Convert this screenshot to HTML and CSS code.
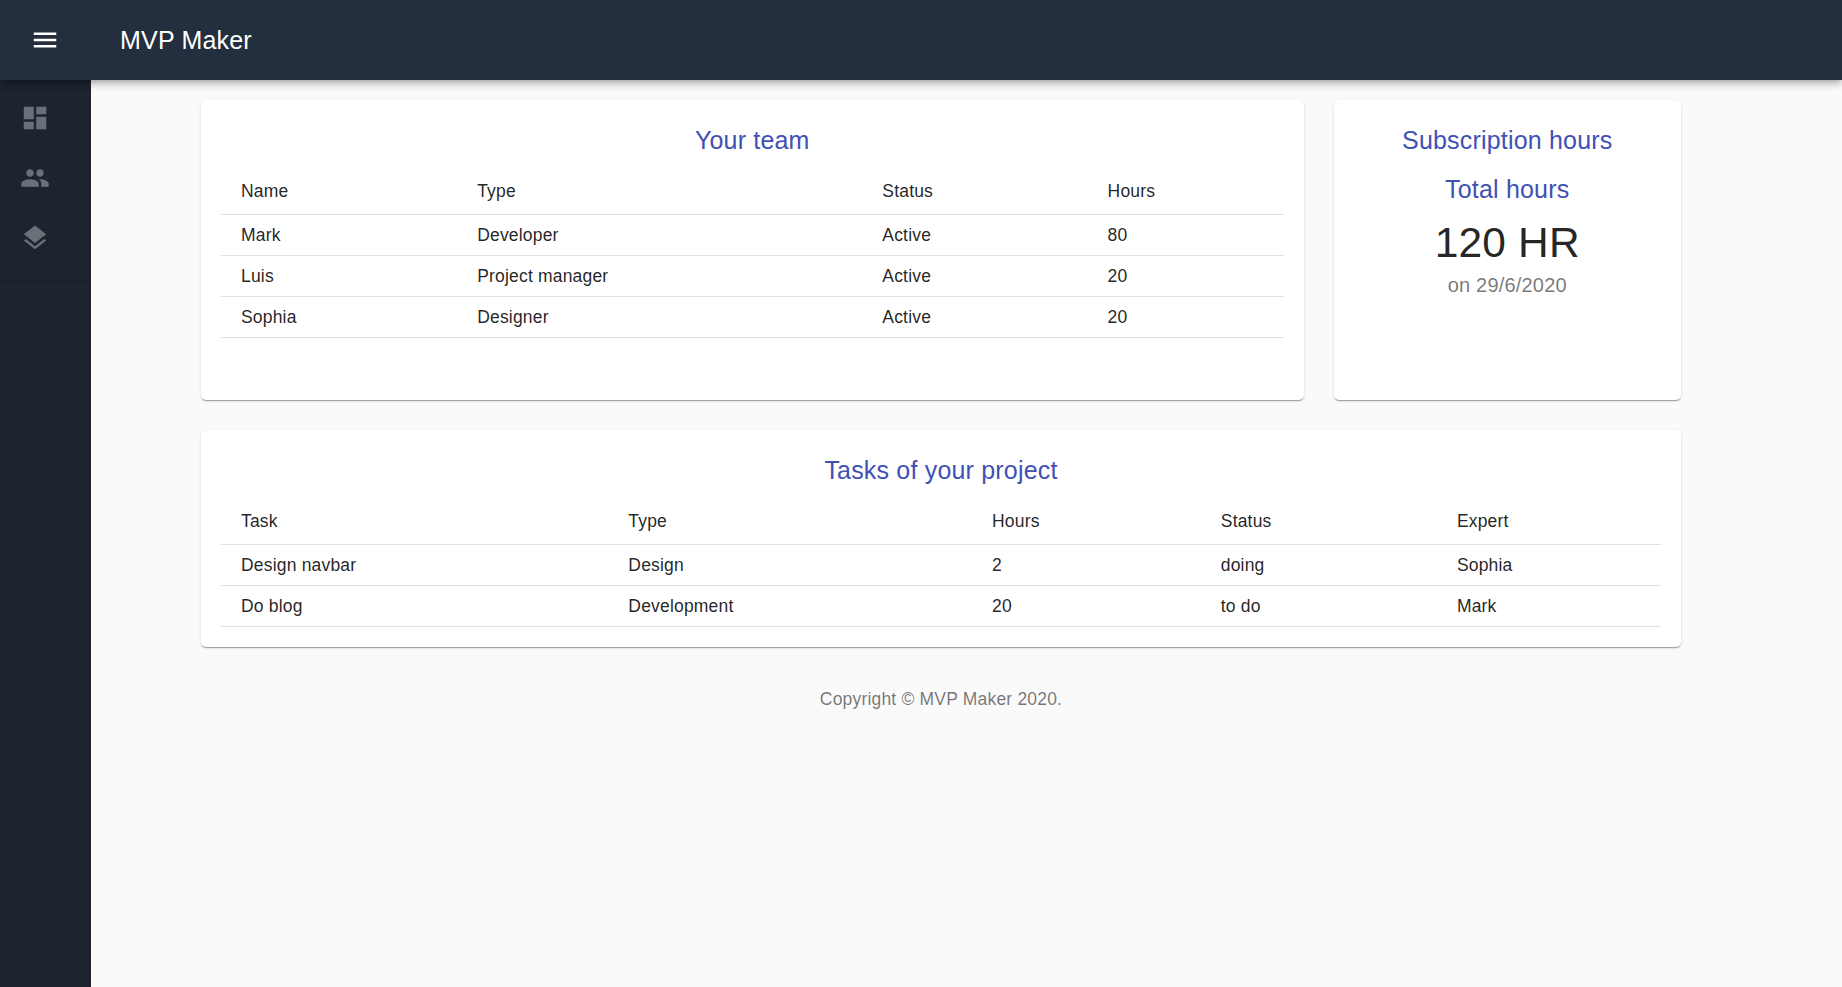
FILE: index.html
```html
<!DOCTYPE html>
<html lang="en">
<head>
  <meta charset="UTF-8" />
  <meta name="viewport" content="width=device-width, initial-scale=1.0"/>
  <title>MVP Maker</title>
  <link rel="stylesheet" href="styles.css">
</head>
<body>
  <header class="app-bar">
    <button class="menu-btn" aria-label="open drawer">
      <svg class="icon" viewBox="0 0 24 24"><path d="M3 18h18v-2H3v2zm0-5h18v-2H3v2zm0-7v2h18V6H3z"/></svg>
    </button>
    <h1 class="app-title">MVP Maker</h1>
  </header>

  <div class="layout">
    <nav class="drawer">
      <ul class="nav-list">
        <li><a href="#" aria-label="Dashboard"><svg class="icon" viewBox="0 0 24 24"><path d="M3 13h8V3H3v10zm0 8h8v-6H3v6zm10 0h8V11h-8v10zm0-18v6h8V3h-8z"/></svg></a></li>
        <li><a href="#" aria-label="Team"><svg class="icon" viewBox="0 0 24 24"><path d="M16 11c1.66 0 2.99-1.34 2.99-3S17.66 5 16 5c-1.66 0-3 1.34-3 3s1.34 3 3 3zm-8 0c1.66 0 2.99-1.34 2.99-3S9.66 5 8 5C6.34 5 5 6.34 5 8s1.34 3 3 3zm0 2c-2.33 0-7 1.17-7 3.5V19h14v-2.5c0-2.33-4.67-3.5-7-3.5zm8 0c-.29 0-.62.02-.97.05 1.16.84 1.97 1.97 1.97 3.45V19h6v-2.5c0-2.33-4.67-3.5-7-3.5z"/></svg></a></li>
        <li><a href="#" aria-label="Projects"><svg class="icon" viewBox="0 0 24 24"><path d="M11.99 18.54l-7.37-5.73L3 14.07l9 7 9-7-1.63-1.27-7.38 5.74zM12 16l7.36-5.73L21 9l-9-7-9 7 1.63 1.27L12 16z"/></svg></a></li>
      </ul>
    </nav>

    <main class="content">
      <div class="grid">
        <section class="paper">
          <h2>Your team</h2>
          <table>
            <thead>
              <tr><th>Name</th><th>Type</th><th>Status</th><th>Hours</th></tr>
            </thead>
            <tbody>
              <tr><td>Mark</td><td>Developer</td><td>Active</td><td>80</td></tr>
              <tr><td>Luis</td><td>Project manager</td><td>Active</td><td>20</td></tr>
              <tr><td>Sophia</td><td>Designer</td><td>Active</td><td>20</td></tr>
            </tbody>
          </table>
        </section>

        <section class="paper">
          <h2>Subscription hours</h2>
          <h2>Total hours</h2>
          <p class="hours">120 HR</p>
          <p class="date">on 29/6/2020</p>
        </section>

        <section class="paper tasks">
          <h2>Tasks of your project</h2>
          <table>
            <thead>
              <tr><th>Task</th><th>Type</th><th>Hours</th><th>Status</th><th>Expert</th></tr>
            </thead>
            <tbody>
              <tr><td>Design navbar</td><td>Design</td><td>2</td><td>doing</td><td>Sophia</td></tr>
              <tr><td>Do blog</td><td>Development</td><td>20</td><td>to do</td><td>Mark</td></tr>
            </tbody>
          </table>
        </section>
      </div>
      <footer>Copyright © MVP Maker 2020.</footer>
    </main>
  </div>
</body>
</html>
```
FILE: styles.css
```css
* { box-sizing: border-box; }
body {
  margin: 0;
  height: 100vh;
  display: flex;
  flex-direction: column;
  background: #fafafa;
  color: rgba(0, 0, 0, 0.87);
  font-family: "Liberation Sans", Arial, sans-serif;
  font-size: 17.5px;
  line-height: 1.43;
  letter-spacing: 0.01071em;
}
h1, h2, p, ul { margin: 0; padding: 0; }
.icon { display: block; width: 30px; height: 30px; fill: currentColor; }

/* top bar */
.app-bar {
  position: relative;
  z-index: 1;
  flex: none;
  display: flex;
  align-items: center;
  height: 80px;
  padding: 0 30px;
  background: #232f3e;
  color: #fff;
  box-shadow: 0 2.5px 5px -1.25px rgba(0, 0, 0, 0.2), 0 5px 6.25px rgba(0, 0, 0, 0.14), 0 1.25px 12.5px rgba(0, 0, 0, 0.12);
}
.menu-btn { margin: 0 45px 0 -15px; padding: 15px; border: 0; background: none; color: inherit; }
.app-title { font-size: 25px; font-weight: 400; line-height: 1.6; letter-spacing: 0.0075em; }

.layout { flex: 1; display: flex; min-height: 0; }

/* side menu */
.drawer { flex: none; width: 91px; background: #1d2430; }
.nav-list { list-style: none; padding: 11px 0 10px; border-bottom: 2px solid rgba(0, 0, 0, 0.1); }
.nav-list a { display: block; height: 60px; padding: 12px 20px; color: #697078; }

/* content */
.content { flex: 1; padding: 20px 51px 0 0; overflow: auto; }
.grid { display: grid; grid-template-columns: 1102.5px 347.5px; gap: 30px; width: 1480px; margin: 0 auto; }
.paper {
  min-height: 300px;
  padding: 20px;
  border-radius: 5px;
  background: #fff;
  text-align: center;
  box-shadow: 0 2px 1px -1px rgba(0, 0, 0, 0.2), 0 1px 1px rgba(0, 0, 0, 0.14), 0 1px 3px rgba(0, 0, 0, 0.12);
}
.tasks { grid-column: 1 / -1; min-height: 0; }
h2 { margin-bottom: 0.35em; color: #3f51b5; font-size: 25px; font-weight: 400; line-height: 1.6; letter-spacing: 0.0075em; }

table { width: 100%; border-collapse: separate; border-spacing: 0; text-align: left; }
th, td { padding: 7.5px 30px 7.5px 20px; border-bottom: 1px solid #e0e0e0; font-weight: 400; }
th:last-child, td:last-child { padding-right: 20px; }
th { line-height: 30px; }
td { padding-top: 8px; padding-bottom: 7px; }

.hours { margin: -1px 0 1px; font-size: 42.5px; line-height: 1.235; }
.date { color: rgba(0, 0, 0, 0.54); font-size: 20px; line-height: 1.5; letter-spacing: 0.00938em; }
footer { padding-top: 40px; text-align: center; color: rgba(0, 0, 0, 0.54); }
```
